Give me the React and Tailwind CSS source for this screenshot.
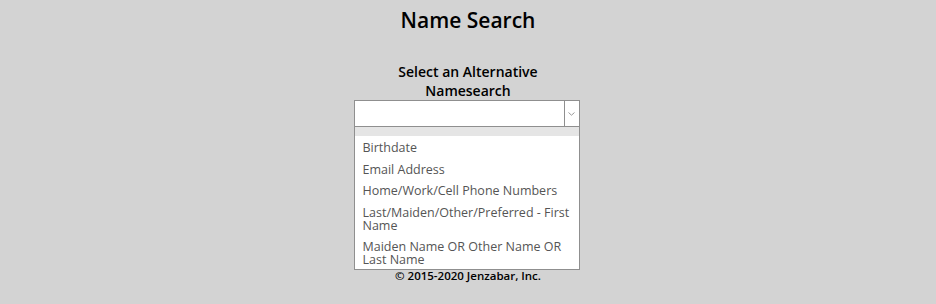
import React from "react";

const items = [
  "Birthdate",
  "Email Address",
  "Home/Work/Cell Phone Numbers",
  "Last/Maiden/Other/Preferred - First Name",
  "Maiden Name OR Other Name OR Last Name",
];

export default function App() {
  return (
    <div
      className="w-[936px] h-[304px] bg-[#d3d3d3] flex flex-col items-center text-black"
      style={{ fontFamily: "'Open Sans', 'Noto Sans', sans-serif" }}
    >
      <h1 className="mt-[6px] text-[21px] leading-[28px] font-semibold">Name Search</h1>
      <div className="mt-[28px] w-[226px] text-center text-[14px] leading-[19px] font-semibold">
        Select an Alternative Namesearch
      </div>
      <div className="mt-[0px] w-[226px] ml-[-3px]">
        <div className="h-[27px] bg-white border border-[#8f8f8f] flex">
          <div className="flex-1" />
          <div className="w-[15px] border-l border-[#8f8f8f] flex items-center justify-center">
            <svg width="7" height="4" viewBox="0 0 7 4">
              <path d="M0.5 0.5 L3.5 3.2 L6.5 0.5" fill="none" stroke="#9a9a9a" strokeWidth="1" />
            </svg>
          </div>
        </div>
        <div className="bg-white border border-t-0 border-[#8f8f8f]">
          <div className="h-[9px] bg-[#e5e5e5]" />
          <ul className="pt-[1px] text-[12.5px] leading-[13px] text-[#555555]">
            {items.map((t, i) => (
              <li key={t} className={i === items.length - 1 ? "pl-[8px] pr-[3px] pt-[4.25px] pb-[2.5px]" : "pl-[8px] pr-[3px] py-[4.25px]"}>
                {t}
              </li>
            ))}
          </ul>
        </div>
      </div>
      <div className="mt-[-1px] text-[11.5px] leading-[14px] font-semibold">© 2015-2020 Jenzabar, Inc.</div>
    </div>
  );
}
